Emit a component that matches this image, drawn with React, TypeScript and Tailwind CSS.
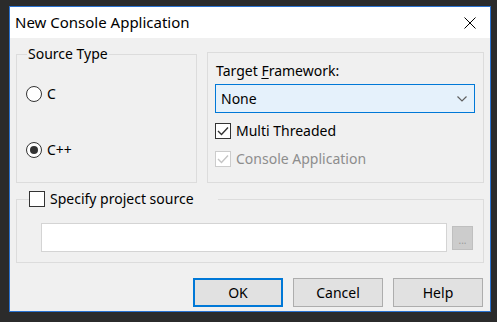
import React from 'react';

const font = { fontFamily: '"Noto Sans", "Open Sans", sans-serif' };

const Radio: React.FC<{ checked?: boolean; label: string }> = ({ checked, label }) => (
  <label className="flex items-center h-[20px] gap-[5px]">
    <span className="w-[16px] h-[16px] rounded-full border border-[#333333] bg-white flex items-center justify-center">
      {checked && <span className="w-[8px] h-[8px] rounded-full bg-[#333333]" />}
    </span>
    <span className="text-[14px] leading-[18px] text-black">{label}</span>
  </label>
);

const Check: React.FC<{ checked?: boolean; disabled?: boolean; label: string }> = ({
  checked,
  disabled,
  label,
}) => (
  <label className="flex items-center h-[20px] gap-[5px]">
    <span
      className={`w-[16px] h-[16px] border bg-white flex items-center justify-center ${
        disabled ? 'border-[#cccccc]' : 'border-[#333333]'
      }`}
    >
      {checked && (
        <svg width="12" height="10" viewBox="0 0 12 10">
          <path
            d="M1 5 L4.5 8.5 L11 1.5"
            fill="none"
            stroke={disabled ? '#c4c4c4' : '#333333'}
            strokeWidth="1.4"
          />
        </svg>
      )}
    </span>
    <span className={`text-[14px] leading-[18px] ${disabled ? 'text-[#8d8d8d]' : 'text-black'}`}>
      {label}
    </span>
  </label>
);

const App: React.FC = () => {
  return (
    <div className="w-[497px] h-[322px] bg-[#2b2b2b] pt-[6px] pl-[9px]" style={font}>
      <div className="w-[482px] h-[306px] border border-[#2a72d0] flex flex-col bg-[#f0f0f0]">
        {/* title bar */}
        <div className="h-[31px] bg-white flex items-center justify-between pl-[5px] pr-[14px]">
          <span className="text-[15px] text-black">New Console Application</span>
          <svg width="12" height="12" viewBox="0 0 12 12">
            <path d="M0.5 0.5 L11.5 11.5 M11.5 0.5 L0.5 11.5" stroke="#000" strokeWidth="1" />
          </svg>
        </div>

        {/* body */}
        <div className="flex-1 pl-[6px] pr-[6px] pt-[14px]">
          <div className="flex items-start">
            <div className="relative mt-[2px] w-[181px] h-[129px] border border-[#dcdcdc]">
              <span className="absolute left-[10px] top-[-10px] px-[1px] bg-[#f0f0f0] text-[14px] leading-[18px] text-black">
                Source Type
              </span>
              <div className="flex flex-col pl-[9px] pt-[29px] gap-[36px]">
                <Radio label="C" />
                <Radio checked label="C++" />
              </div>
            </div>

            <div className="ml-[10px] w-[277px] h-[131px] border border-[#dcdcdc] pl-[7px] pt-[9px]">
              <div className="ml-[1px] text-[14px] leading-[18px] text-black">
                Target <span className="underline underline-offset-2">F</span>ramework:
              </div>
              <div className="mt-[4px] w-[260px] h-[29px] border border-[#0078d7] bg-[#e5f1fb] flex items-center justify-between pl-[5px] pr-[7px]">
                <span className="text-[14px] text-black">None</span>
                <svg width="10" height="6" viewBox="0 0 10 6">
                  <path d="M0.5 0.5 L5 5 L9.5 0.5" fill="none" stroke="#606060" strokeWidth="1.2" />
                </svg>
              </div>
              <div className="mt-[8px] flex flex-col gap-[8px]">
                <Check checked label="Multi Threaded" />
                <Check checked disabled label="Console Application" />
              </div>
            </div>
          </div>

          <div className="relative mt-[16px] w-[468px] h-[64px] border border-[#dcdcdc] pl-[24px] pt-[23px]">
            <div className="absolute left-[12px] top-[-11px] w-[189px] bg-[#f0f0f0]">
              <Check label="Specify project source" />
            </div>
            <div className="flex items-center">
              <div className="w-[406px] h-[29px] bg-white border border-[#d4d4d4]" />
              <button className="ml-[5px] w-[21px] h-[24px] bg-[#cccccc] border border-[#bfbfbf] text-[10px] leading-none text-[#9a9a9a] flex items-center justify-center pt-[4px]">
                ...
              </button>
            </div>
          </div>

          <div className="mt-[15px] flex justify-end gap-[10px] pr-[1px]">
            <button className="w-[90px] h-[29px] bg-[#e1e1e1] border-2 border-[#0078d7] text-[14px] text-black">
              OK
            </button>
            <button className="w-[90px] h-[29px] bg-[#e1e1e1] border border-[#adadad] text-[14px] text-black">
              Cancel
            </button>
            <button className="w-[90px] h-[29px] bg-[#e1e1e1] border border-[#adadad] text-[14px] text-black">
              Help
            </button>
          </div>
        </div>
      </div>
    </div>
  );
};

export default App;
